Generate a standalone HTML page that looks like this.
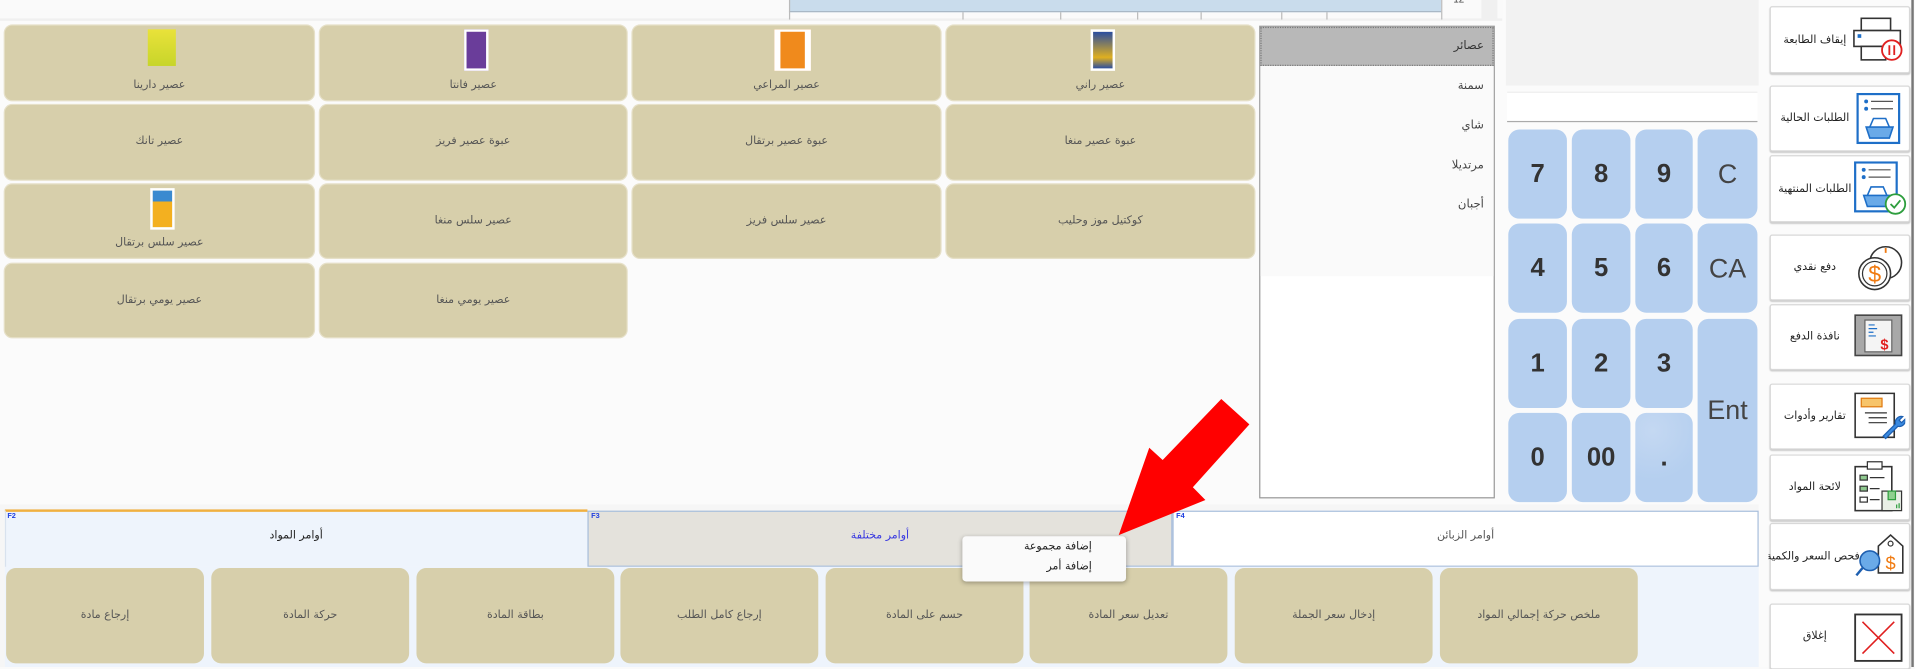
<!DOCTYPE html>
<html><head><meta charset="utf-8">
<style>
html,body{margin:0;padding:0;width:1915px;height:667px;overflow:hidden;background:#fafafa;}
#s{position:absolute;left:0;top:0;width:1568px;height:546px;transform:scale(1.22130,1.22161);transform-origin:0 0;font-family:"DejaVu Sans","Liberation Sans",sans-serif;background:#fbfbfb;}
.a{position:absolute;box-sizing:border-box;}
.tile{position:absolute;background:#d7cfab;border-radius:6px;color:#555;font-size:9px;text-align:center;box-shadow:0 0 0 1px #e6e0c8;}
.tile span{position:absolute;left:0;right:0;}
.img{position:absolute;left:50%;background:#fff;}
.key{position:absolute;background:#b5cfef;border-radius:9px;color:#333;display:flex;align-items:center;justify-content:center;font-family:"Liberation Sans",sans-serif;}
.kb{font-weight:bold;font-size:21px;}
.kn{font-size:22px;color:#444;}
.rb{position:absolute;left:1449px;width:113px;background:#fff;border:1px solid #d8d8d8;border-radius:2px;box-shadow:0 1px 1px #ccc;font-size:9px;color:#222;}
.rb .t{position:absolute;left:0;width:72px;top:0;bottom:0;display:flex;align-items:center;justify-content:center;white-space:nowrap;overflow:hidden;}
.rb svg{position:absolute;right:3px;}
.cmd{position:absolute;top:465px;height:78px;width:162px;background:#d7cfab;border-radius:8px;color:#555;font-size:9px;display:flex;align-items:center;justify-content:center;}
.cat{position:absolute;right:10px;font-size:9px;color:#444;}
</style></head><body><div id="s">
<!-- top area -->
<div class="a" style="left:0;top:0;width:1230px;height:17px;background:#fafafa;border-bottom:2px solid #f0f0f0"></div>
<div class="a" style="left:646px;top:0;width:534px;height:10px;background:#c9dcec;border-bottom:1px solid #a9b8c6"></div>
<div class="a" style="left:646px;top:0;width:1px;height:16px;background:#bbb"></div>
<div class="a" style="left:788px;top:10px;width:1px;height:6px;background:#bbb"></div>
<div class="a" style="left:868px;top:10px;width:1px;height:6px;background:#bbb"></div>
<div class="a" style="left:931px;top:10px;width:1px;height:6px;background:#bbb"></div>
<div class="a" style="left:983px;top:10px;width:1px;height:6px;background:#bbb"></div>
<div class="a" style="left:1049px;top:10px;width:1px;height:6px;background:#bbb"></div>
<div class="a" style="left:1086px;top:10px;width:1px;height:6px;background:#bbb"></div>
<div class="a" style="left:1180px;top:0;width:1px;height:16px;background:#bbb"></div>
<div class="a" style="left:1190px;top:-5px;font-size:8px;color:#444;font-family:'Liberation Sans'">12</div>
<div class="a" style="left:1213px;top:0;width:13px;height:16px;background:#f0f0f0"></div>

<!-- tiles -->
<div class="tile" style="left:4px;top:21px;width:253px;height:61px"><div class="img" style="top:3px;margin-left:-10px;width:23px;height:30px;background:linear-gradient(#e9e23a,#c7d52a)"></div><span style="top:44px">عصير دارينا</span></div>
<div class="tile" style="left:262px;top:21px;width:251px;height:61px"><div class="img" style="top:3px;margin-left:-8px;width:16px;height:30px;border:2px solid #fff;background:#6a3d9a"></div><span style="top:44px">عصير فانتا</span></div>
<div class="tile" style="left:518px;top:21px;width:252px;height:61px"><div class="img" style="top:3px;margin-left:-10px;width:20px;height:30px;border:3px solid #fff;border-width:2px 5px;background:#f08a1c"></div><span style="top:44px">عصير المراعي</span></div>
<div class="tile" style="left:775px;top:21px;width:252px;height:61px"><div class="img" style="top:3px;margin-left:-8px;width:16px;height:30px;border:2px solid #fff;background:linear-gradient(#2a4da0,#e0b020 70%,#2a4da0)"></div><span style="top:44px">عصير راني</span></div>

<div class="tile" style="left:4px;top:86px;width:253px;height:61px"><span style="top:25px">عصير تانك</span></div>
<div class="tile" style="left:262px;top:86px;width:251px;height:61px"><span style="top:25px">عبوة عصير فريز</span></div>
<div class="tile" style="left:518px;top:86px;width:252px;height:61px"><span style="top:25px">عبوة عصير برتقال</span></div>
<div class="tile" style="left:775px;top:86px;width:252px;height:61px"><span style="top:25px">عبوة عصير منغا</span></div>

<div class="tile" style="left:4px;top:151px;width:253px;height:60px"><div class="img" style="top:3px;margin-left:-8px;width:16px;height:30px;border:2px solid #fff;background:linear-gradient(#3a8ad0 30%,#f3b020 30%)"></div><span style="top:43px">عصير سلس برتقال</span></div>
<div class="tile" style="left:262px;top:151px;width:251px;height:60px"><span style="top:25px">عصير سلس منغا</span></div>
<div class="tile" style="left:518px;top:151px;width:252px;height:60px"><span style="top:25px">عصير سلس فريز</span></div>
<div class="tile" style="left:775px;top:151px;width:252px;height:60px"><span style="top:25px">كوكتيل موز وحليب</span></div>

<div class="tile" style="left:4px;top:216px;width:253px;height:60px"><span style="top:25px">عصير يومي برتقال</span></div>
<div class="tile" style="left:262px;top:216px;width:251px;height:60px"><span style="top:25px">عصير يومي منغا</span></div>

<!-- categories -->
<div class="a" style="left:1031px;top:21px;width:193px;height:387px;background:#fff;border:1px solid #999"></div>
<div class="a" style="left:1032px;top:22px;width:191px;height:32px;background:#b8b8b8;border:1px dotted #777"></div>
<div class="a" style="left:1032px;top:54px;width:191px;height:172px;background:#fafafa"></div>
<div class="a" style="left:1032px;top:32px;width:183px;text-align:right;font-size:9.5px;color:#333">عصائر</div>
<div class="a" style="left:1032px;top:65px;width:183px;text-align:right;font-size:9.5px;color:#444">سمنة</div>
<div class="a" style="left:1032px;top:97px;width:183px;text-align:right;font-size:9.5px;color:#444">شاي</div>
<div class="a" style="left:1032px;top:130px;width:183px;text-align:right;font-size:9.5px;color:#444">مرتديلا</div>
<div class="a" style="left:1032px;top:162px;width:183px;text-align:right;font-size:9.5px;color:#444">أجبان</div>

<!-- right panel -->
<div class="a" style="left:1233px;top:0;width:207px;height:70px;background:#f2f2f2"></div>
<div class="a" style="left:1234px;top:75px;width:205px;height:25px;background:#fff;border-bottom:1px solid #aaa;border-top:1px solid #eee"></div>
<div class="a" style="left:1233px;top:103px;width:207px;height:310px;background:#fbfbfb"></div>
<div class="key kb" style="left:1235px;top:106px;width:48px;height:73px">7</div>
<div class="key kb" style="left:1287px;top:106px;width:48px;height:73px">8</div>
<div class="key kb" style="left:1339px;top:106px;width:47px;height:73px">9</div>
<div class="key kn" style="left:1390px;top:106px;width:49px;height:73px">C</div>
<div class="key kb" style="left:1235px;top:183px;width:48px;height:73px">4</div>
<div class="key kb" style="left:1287px;top:183px;width:48px;height:73px">5</div>
<div class="key kb" style="left:1339px;top:183px;width:47px;height:73px">6</div>
<div class="key kn" style="left:1390px;top:183px;width:49px;height:73px">CA</div>
<div class="key kb" style="left:1235px;top:261px;width:48px;height:73px">1</div>
<div class="key kb" style="left:1287px;top:261px;width:48px;height:73px">2</div>
<div class="key kb" style="left:1339px;top:261px;width:47px;height:73px">3</div>
<div class="key kn" style="left:1390px;top:261px;width:49px;height:150px">Ent</div>
<div class="key kb" style="left:1235px;top:338px;width:48px;height:73px">0</div>
<div class="key kb" style="left:1287px;top:338px;width:48px;height:73px">00</div>
<div class="key kb" style="left:1339px;top:338px;width:47px;height:73px;background:radial-gradient(circle at 30% 20%,#c4d8f2,#b5cfef 60%)">.</div>

<!-- right buttons -->
<div class="a" style="left:1565px;top:0;width:2px;height:546px;background:#777"></div>
<div class="rb" style="top:5px;height:53px"><div class="t">إيقاف الطابعة</div>
<svg width="44" height="40" viewBox="0 0 44 40" style="top:6px"><rect x="8" y="3" width="24" height="10" fill="#fff" stroke="#333" stroke-width="1.3"/><rect x="2" y="13" width="38" height="13" fill="#fff" stroke="#333" stroke-width="1.3"/><rect x="5" y="16" width="3" height="3" fill="#1e6fc8"/><rect x="8" y="26" width="20" height="11" fill="#fff" stroke="#333" stroke-width="1.3"/><circle cx="33" cy="29" r="8" fill="#fff" stroke="#e02020" stroke-width="1.5"/><path d="M31 25v8M35 25v8" stroke="#e02020" stroke-width="1.5"/></svg></div>
<div class="rb" style="top:70px;height:52px"><div class="t">الطلبات الحالية</div>
<svg width="44" height="44" viewBox="0 0 44 44" style="top:5px"><rect x="5" y="1" width="34" height="40" fill="#fff" stroke="#1e6fc8" stroke-width="1.8"/><circle cx="12" cy="7" r="1.6" fill="#1e6fc8"/><circle cx="12" cy="13" r="1.6" fill="#1e6fc8"/><path d="M16 7h18M16 13h18" stroke="#555"/><path d="M12 28h22l-3 9H15z" fill="#6aaae8" stroke="#1e6fc8" stroke-width="1.3"/><path d="M15 28l3-7h10l3 7" fill="none" stroke="#1e6fc8" stroke-width="1.3"/></svg></div>
<div class="rb" style="top:127px;height:53px"><div class="t">الطلبات المنتهية</div>
<svg width="44" height="44" viewBox="0 0 44 44" style="top:4px;right:2px"><rect x="2" y="1" width="34" height="40" fill="#fff" stroke="#1e6fc8" stroke-width="1.8"/><circle cx="9" cy="7" r="1.6" fill="#1e6fc8"/><circle cx="9" cy="13" r="1.6" fill="#1e6fc8"/><path d="M13 7h18M13 13h18" stroke="#555"/><path d="M9 28h22l-3 9H12z" fill="#6aaae8" stroke="#1e6fc8" stroke-width="1.3"/><path d="M12 28l3-7h10l3 7" fill="none" stroke="#1e6fc8" stroke-width="1.3"/><circle cx="35" cy="35" r="8" fill="#fff" stroke="#2e9e3e" stroke-width="1.5"/><path d="M31 35l3 3 5-6" fill="none" stroke="#2e9e3e" stroke-width="1.5"/></svg></div>
<div class="rb" style="top:192px;height:52px"><div class="t">دفع نقدي</div>
<svg width="44" height="44" viewBox="0 0 44 44" style="top:4px"><circle cx="28" cy="18" r="13" fill="#fff" stroke="#333" stroke-width="1.3"/><circle cx="19" cy="27" r="13" fill="#fff" stroke="#333" stroke-width="1.3"/><circle cx="19" cy="27" r="10" fill="none" stroke="#333"/><text x="19" y="34" font-size="19" text-anchor="middle" fill="#f07a10" font-family="Liberation Sans">$</text><path d="M28 6v4" stroke="#f07a10" stroke-width="1.5"/></svg></div>
<div class="rb" style="top:249px;height:52px"><div class="t">نافذة الدفع</div>
<svg width="44" height="44" viewBox="0 0 44 44" style="top:5px"><rect x="3" y="3" width="38" height="33" fill="#a8a8a8" stroke="#444" stroke-width="1.3"/><rect x="11" y="7" width="22" height="26" fill="#f4f4f4" stroke="#666"/><path d="M14 11h5M14 14h7M14 17h4M14 20h6" stroke="#1e6fc8"/><text x="27" y="31" font-size="12" text-anchor="middle" fill="#e02020" font-weight="bold" font-family="Liberation Sans">$</text></svg></div>
<div class="rb" style="top:314px;height:52px"><div class="t">تقارير وأدوات</div>
<svg width="44" height="44" viewBox="0 0 44 44" style="top:4px"><path d="M3 3h32v36H3z" fill="#fff" stroke="#333" stroke-width="1.3"/><rect x="8" y="7" width="17" height="7" fill="#f7c46a" stroke="#e07a10"/><path d="M11 19h18M14 23h15M14 27h15M35 3v14" stroke="#333"/><path d="M26 38l10-10a5 5 0 0 1 6-6l-3 3 2 2 3-3a5 5 0 0 1-6 6l-10 10z" fill="#3a8ae0" stroke="#1e5fb0"/></svg></div>
<div class="rb" style="top:372px;height:52px"><div class="t">لائحة المواد</div>
<svg width="44" height="44" viewBox="0 0 44 44" style="top:4px"><rect x="3" y="5" width="30" height="36" fill="#fff" stroke="#333" stroke-width="1.3"/><rect x="13" y="1" width="12" height="6" fill="#fff" stroke="#333"/><rect x="7" y="12" width="6" height="4" fill="#8fc98f" stroke="#333"/><rect x="7" y="21" width="6" height="4" fill="#8fc98f" stroke="#333"/><rect x="7" y="30" width="6" height="4" fill="#fff" stroke="#333"/><path d="M15 14h12M15 23h8M15 32h8" stroke="#333"/><rect x="25" y="25" width="16" height="16" fill="#e9efe6" stroke="#333"/><rect x="30" y="25" width="6" height="7" fill="#8fd08f" stroke="#2e9e3e"/><path d="M37 39v-3M39 39v-4" stroke="#2e9e3e"/></svg></div>
<div class="rb" style="top:428px;height:53px"><div class="t" style="width:75px;justify-content:flex-start;direction:rtl;left:-2px">فحص السعر والكمية</div>
<svg width="44" height="44" viewBox="0 0 44 44" style="top:4px;right:1px"><path d="M20 14l10-9 10 9v22H20z" fill="#fff" stroke="#333" stroke-width="1.3"/><circle cx="30" cy="12" r="2" fill="none" stroke="#333"/><text x="30" y="33" font-size="15" text-anchor="middle" fill="#f07a10" font-family="Liberation Sans">$</text><circle cx="13" cy="26" r="8" fill="#6aaae8" stroke="#1e5fb0" stroke-width="1.3"/><path d="M7 32l-5 6" stroke="#1e5fb0" stroke-width="2"/></svg></div>
<div class="rb" style="top:494px;height:52px"><div class="t">إغلاق</div>
<svg width="44" height="44" viewBox="0 0 44 44" style="top:5px"><rect x="3" y="3" width="38" height="38" fill="#fff" stroke="#333" stroke-width="1.5"/><path d="M9 9l26 26M35 9L9 35" stroke="#e02020" stroke-width="1.3"/></svg></div>

<!-- bottom -->
<div class="a" style="left:0;top:413px;width:1440px;height:133px;background:#f6f6f6"></div>
<div class="a" style="left:4px;top:417px;width:477px;height:47px;background:#eef4fc;border-top:2px solid #f0b040;border-left:1px solid #d8e2ee"></div>
<div class="a" style="left:481px;top:418px;width:479px;height:46px;background:#e4e2dc;border:1px solid #a8bedc"></div>
<div class="a" style="left:960px;top:418px;width:480px;height:46px;background:#fff;border:1px solid #a8bedc"></div>
<div class="a" style="left:6px;top:420px;font-size:6px;color:#2040e0;font-family:'Liberation Sans';font-weight:bold">F2</div>
<div class="a" style="left:484px;top:420px;font-size:6px;color:#2040e0;font-family:'Liberation Sans';font-weight:bold">F3</div>
<div class="a" style="left:963px;top:420px;font-size:6px;color:#2040e0;font-family:'Liberation Sans';font-weight:bold">F4</div>
<div class="a" style="left:4px;top:434px;width:477px;text-align:center;font-size:9px;color:#222">أوامر المواد</div>
<div class="a" style="left:481px;top:434px;width:479px;text-align:center;font-size:9px;color:#3a3ae0">أوامر مختلفة</div>
<div class="a" style="left:960px;top:434px;width:480px;text-align:center;font-size:9px;color:#555">أوامر الزبائن</div>
<div class="a" style="left:4px;top:464px;width:1436px;height:82px;background:#eef4fc"></div>
<div class="cmd" style="left:5px">إرجاع مادة</div>
<div class="cmd" style="left:173px">حركة المادة</div>
<div class="cmd" style="left:341px">بطاقة المادة</div>
<div class="cmd" style="left:508px">إرجاع كامل الطلب</div>
<div class="cmd" style="left:676px">حسم على المادة</div>
<div class="cmd" style="left:843px">تعديل سعر المادة</div>
<div class="cmd" style="left:1011px">إدخال سعر الجملة</div>
<div class="cmd" style="left:1179px">ملخص حركة إجمالي المواد</div>

<!-- context menu -->
<div class="a" style="left:788px;top:439px;width:134px;height:37px;background:#fafafa;border-radius:3px;box-shadow:0 1px 4px rgba(0,0,0,.3)"></div>
<div class="a" style="left:788px;top:443px;width:106px;text-align:right;font-size:9px;color:#222">إضافة مجموعة</div>
<div class="a" style="left:788px;top:459px;width:106px;text-align:right;font-size:9px;color:#222">إضافة أمر</div>

<!-- arrow -->
<svg class="a" style="left:0;top:0" width="1568" height="546"><polygon points="916,438 941,366.5 952,376.6 1000,326.6 1023,347.4 976.7,398.9 987,409.3" fill="#ff0000"/></svg>
</div></body></html>
